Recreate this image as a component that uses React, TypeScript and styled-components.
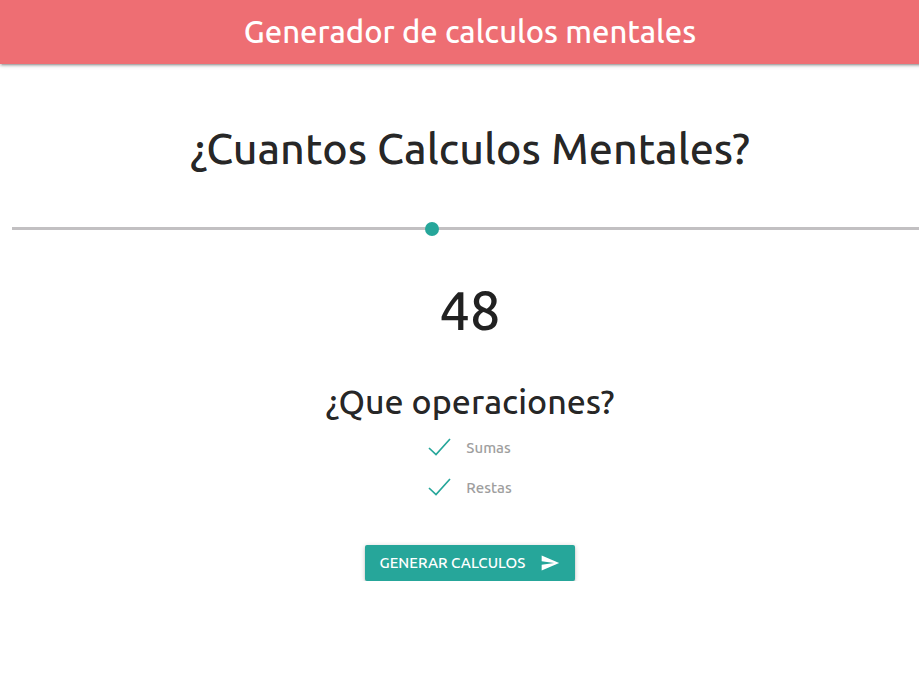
import React, { useState } from "react";
import styled, { createGlobalStyle } from "styled-components";

const GlobalStyle = createGlobalStyle`
  *, *::before, *::after { box-sizing: border-box; }
  body {
    margin: 0;
    background: #fff;
    color: rgba(0, 0, 0, 0.87);
    font-family: Ubuntu, "Noto Sans", "Open Sans", sans-serif;
    font-size: 15px;
    font-weight: 500;
    line-height: 1.5;
    overflow: hidden;
  }
`;

const Page = styled.div`
  margin-right: -21px;
`;

const NavBar = styled.nav`
  display: flex;
  align-items: center;
  justify-content: center;
  height: 64px;
  background: #ee6e73;
  color: #fff;
  box-shadow: 0 2px 2px 0 rgba(0, 0, 0, 0.14), 0 3px 1px -2px rgba(0, 0, 0, 0.12),
    0 1px 5px 0 rgba(0, 0, 0, 0.2);
`;

const Brand = styled.a`
  color: inherit;
  font-size: 31px;
  text-decoration: none;
`;

const Content = styled.form`
  display: flex;
  flex-direction: column;
  align-items: center;
  padding: 56px 12px 0;
`;

const Heading = styled.h1`
  margin: 0;
  font-size: 43px;
  line-height: 56px;
  font-weight: inherit;
`;

const SubHeading = styled.h2`
  margin: 0;
  font-size: 34px;
  line-height: 48px;
  font-weight: inherit;
`;

const Amount = styled.output`
  margin: 43px 0 35px;
  font-size: 54px;
  line-height: 64px;
`;

const Slider = styled.input`
  appearance: none;
  display: block;
  width: 100%;
  height: 14px;
  margin: 45px 0 0;
  background: transparent;
  cursor: pointer;

  &::-webkit-slider-runnable-track {
    height: 3px;
    background: #c2c0c2;
  }
  &::-webkit-slider-thumb {
    appearance: none;
    width: 14px;
    height: 14px;
    margin-top: -5px;
    border-radius: 50%;
    background: #26a69a;
  }
`;

const Options = styled.div`
  display: flex;
  flex-direction: column;
  gap: 16px;
  margin-top: 11px;
`;

const Option = styled.label`
  display: flex;
  align-items: center;
  gap: 14px;
  height: 24px;
  color: #9e9e9e;
  cursor: pointer;
`;

const CheckFrame = styled.span`
  display: grid;
  width: 24px;
  height: 24px;

  & > * { grid-area: 1 / 1; }
`;

const CheckInput = styled.input`
  appearance: none;
  width: 18px;
  height: 18px;
  margin: 3px;
  border: 2px solid #5a5a5a;
  border-radius: 1px;

  &:checked { border-color: transparent; }
  &:not(:checked) + svg { visibility: hidden; }
`;

const CheckMark = styled.svg`
  width: 24px;
  height: 24px;
  fill: none;
  stroke: #26a69a;
  stroke-width: 1.7;
  pointer-events: none;
`;

const SubmitButton = styled.button`
  display: flex;
  align-items: center;
  gap: 15px;
  height: 36px;
  margin-top: 45px;
  padding: 0 15px;
  border: 0;
  border-radius: 2px;
  background: #26a69a;
  color: #fff;
  font: inherit;
  text-transform: uppercase;
  cursor: pointer;
  box-shadow: 0 2px 2px 0 rgba(0, 0, 0, 0.14), 0 3px 1px -2px rgba(0, 0, 0, 0.12),
    0 1px 5px 0 rgba(0, 0, 0, 0.2);
`;

const SendIcon = styled.svg`
  width: 20px;
  height: 20px;
  fill: currentColor;
`;

const operations = ["Sumas", "Restas"];

export default function App() {
  const [amount, setAmount] = useState(48);

  return (
    <Page>
      <GlobalStyle />
      <NavBar>
        <Brand href="#">Generador de calculos mentales</Brand>
      </NavBar>
      <Content onSubmit={(event) => event.preventDefault()}>
        <Heading id="amount-label">¿Cuantos Calculos Mentales?</Heading>
        <Slider
          id="amount"
          type="range"
          min={4}
          max={100}
          value={amount}
          aria-labelledby="amount-label"
          onChange={(event) => setAmount(Number(event.target.value))}
        />
        <Amount htmlFor="amount">{amount}</Amount>
        <SubHeading id="operations-label">¿Que operaciones?</SubHeading>
        <Options role="group" aria-labelledby="operations-label">
          {operations.map((name) => (
            <Option key={name}>
              <CheckFrame>
                <CheckInput type="checkbox" defaultChecked />
                <CheckMark viewBox="0 0 24 24" aria-hidden="true">
                  <path d="M1 12 8 18.5 22 3" />
                </CheckMark>
              </CheckFrame>
              {name}
            </Option>
          ))}
        </Options>
        <SubmitButton type="submit">
          Generar calculos
          <SendIcon viewBox="0 0 24 24" aria-hidden="true">
            <path d="M2.01 21 23 12 2.01 3 2 10l15 2-15 2z" />
          </SendIcon>
        </SubmitButton>
      </Content>
    </Page>
  );
}
